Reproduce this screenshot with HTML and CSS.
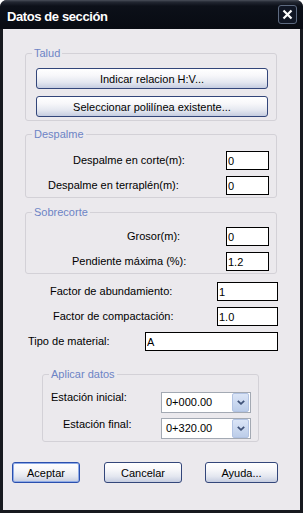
FILE: index.html
```html
<!DOCTYPE html>
<html lang="es">
<head>
<meta charset="utf-8">
<title>Datos de sección</title>
<link rel="stylesheet" href="styles.css">
</head>
<body>
<div class="window">
  <div class="titlebar">
    <span class="title">Datos de sección</span>
    <button class="close" aria-label="Cerrar">
      <svg width="11" height="11" viewBox="0 0 11 11"><path d="M1.5 1.5 L9.5 9.5 M9.5 1.5 L1.5 9.5" stroke="#fff" stroke-width="2.2" fill="none"/></svg>
    </button>
  </div>
  <div class="client">
    <fieldset class="group g-talud">
      <legend>Talud</legend>
      <div class="stack">
        <button class="btn wide">Indicar relacion H:V...</button>
        <button class="btn wide">Seleccionar polilínea existente...</button>
      </div>
    </fieldset>

    <fieldset class="group g-desp">
      <legend>Despalme</legend>
      <div class="rows">
        <div class="row"><span class="lbl l-corte">Despalme en corte(m):</span><input class="txt short" value="0"></div>
        <div class="row"><span class="lbl l-terr">Despalme en terraplén(m):</span><input class="txt short" value="0"></div>
      </div>
    </fieldset>

    <fieldset class="group g-sobre">
      <legend>Sobrecorte</legend>
      <div class="rows">
        <div class="row"><span class="lbl l-grosor">Grosor(m):</span><input class="txt short" value="0"></div>
        <div class="row"><span class="lbl l-pend">Pendiente máxima (%):</span><input class="txt short" value="1.2"></div>
      </div>
    </fieldset>

    <div class="rows fields">
      <div class="row"><span class="lbl l-abund">Factor de abundamiento:</span><input class="txt mid" value="1"></div>
      <div class="row"><span class="lbl l-comp">Factor de compactación:</span><input class="txt mid" value="1.0"></div>
      <div class="row"><span class="lbl l-tipo">Tipo de material:</span><input class="txt long" value="A"></div>
    </div>

    <fieldset class="group g-apl">
      <legend>Aplicar datos</legend>
      <div class="rows combos">
        <div class="row crow"><span class="lbl l-ini">Estación inicial:</span>
          <div class="combo"><span class="cval">0+000.00</span><span class="arrow"><svg width="8" height="5" viewBox="0 0 8 5"><path d="M0.8 0.8 L4 3.8 L7.2 0.8" stroke="#3f5278" stroke-width="1.8" fill="none"/></svg></span></div>
        </div>
        <div class="row crow"><span class="lbl l-fin">Estación final:</span>
          <div class="combo"><span class="cval">0+320.00</span><span class="arrow"><svg width="8" height="5" viewBox="0 0 8 5"><path d="M0.8 0.8 L4 3.8 L7.2 0.8" stroke="#3f5278" stroke-width="1.8" fill="none"/></svg></span></div>
        </div>
      </div>
    </fieldset>

    <div class="actions">
      <button class="btn b-ok default">Aceptar</button>
      <button class="btn b-cancel">Cancelar</button>
      <button class="btn b-help">Ayuda...</button>
    </div>
  </div>
</div>
</body>
</html>
```
FILE: styles.css
```css
* { box-sizing: border-box; }
html, body { margin: 0; padding: 0; }
body {
  width: 303px;
  height: 513px;
  overflow: hidden;
  background: #ffffff;
  font-family: "Liberation Sans", Arial, sans-serif;
  font-size: 11px;
  color: #000;
}
.window {
  width: 303px;
  height: 513px;
  display: flex;
  flex-direction: column;
  background: #17191f;
  border-radius: 7px 7px 0 0;
}
.titlebar {
  height: 29px;
  flex: none;
  display: flex;
  align-items: center;
  padding: 0 6px 0 7px;
  border-radius: 7px 7px 0 0;
  background: linear-gradient(#4a4f5a 0, #222732 2px, #0c1019 6px, #080b12 100%);
}
.title {
  flex: 1;
  color: #fff;
  font-weight: bold;
  font-size: 13px;
  letter-spacing: -0.4px;
  margin-top: 3px;
}
.close {
  width: 19px;
  height: 19px;
  padding: 0;
  border: 1px solid #5d6a80;
  border-radius: 3px;
  background: #101624;
  display: flex;
  align-items: center;
  justify-content: center;
}
.client {
  flex: 1;
  margin: 0 3px 3px;
  background: #ebe9ed;
  display: flex;
  flex-direction: column;
  align-items: flex-start;
}
.group {
  margin: 0;
  border: 1px solid #d3d1d7;
  border-radius: 3px;
  min-width: 0;
}
.group legend {
  padding: 0 2px;
  margin-left: -4px;
  color: #6d84c5;
  font-size: 11px;
  line-height: 13px;
}
.g-talud { margin: 18px 0 0 22px; width: 252px; padding: 8px 7px 3px 10px; }
.g-desp  { margin: 7px 0 0 22px; width: 252px; padding: 10px 7px 2px 10px; }
.g-sobre { margin: 8px 0 0 22px; width: 252px; padding: 8px 7px 2px 10px; }
.g-apl   { margin: 17px 0 0 39px; width: 217px; padding: 11px 7px 2px 8px; }
.g-apl legend { margin-left: -2px; }

.stack { display: flex; flex-direction: column; gap: 7px; }
.rows { display: flex; flex-direction: column; gap: 6px; }
.row { display: flex; align-items: center; height: 19px; }
.lbl { white-space: nowrap; line-height: 13px; }

.l-corte { margin-left: 37px; }
.l-terr { margin-left: 12px; }
.l-grosor { margin-left: 91px; }
.l-pend { margin-left: 36px; }

.fields { margin-top: 8px; width: 275px; }
.l-abund { margin-left: 47px; }
.l-comp { margin-left: 50px; }
.l-tipo { margin-left: 25px; }

.combos { gap: 5px; }
.crow { height: 21px; align-items: flex-start; }
.l-ini { margin-left: 0; margin-top: -1px; }
.l-fin { margin-left: 12px; margin-top: 0; }

.txt {
  margin-left: auto;
  height: 19px;
  border: 1px solid #000;
  background: #fff;
  padding: 0 1px;
  font-family: "Liberation Sans", Arial, sans-serif;
  font-size: 11px;
  color: #000;
  outline: none;
}
.short { width: 43px; }
.mid { width: 61px; }
.long { width: 133px; }

.combo {
  margin-left: auto;
  width: 90px;
  height: 21px;
  border: 1px solid #a3a9b3;
  background: #fff;
  display: flex;
  align-items: stretch;
  padding: 0 1px 0 0;
}
.cval { flex: 1; padding-left: 4px; line-height: 19px; }
.arrow {
  width: 17px;
  border: 1px solid #b2c3e3;
  border-radius: 2px;
  background: linear-gradient(#dbe5f7, #bccde9);
  display: flex;
  align-items: center;
  justify-content: center;
}

.btn {
  height: 21px;
  padding: 0;
  border: 1px solid #33467a;
  border-radius: 3px;
  background: linear-gradient(#ffffff 0%, #f7f7fa 35%, #e4e7f0 70%, #c5cde0 100%);
  font-family: "Liberation Sans", Arial, sans-serif;
  font-size: 11px;
  color: #000;
}
.wide { width: 232px; }
.actions { margin-top: 20px; margin-left: 9px; display: flex; gap: 24px; }
.b-ok { width: 68px; }
.b-cancel { width: 78px; }
.b-help { width: 73px; margin-left: -1px; }
.default {
  border-color: #2a4fae;
  box-shadow: inset 0 0 0 1px #8fabe6;
}
```
